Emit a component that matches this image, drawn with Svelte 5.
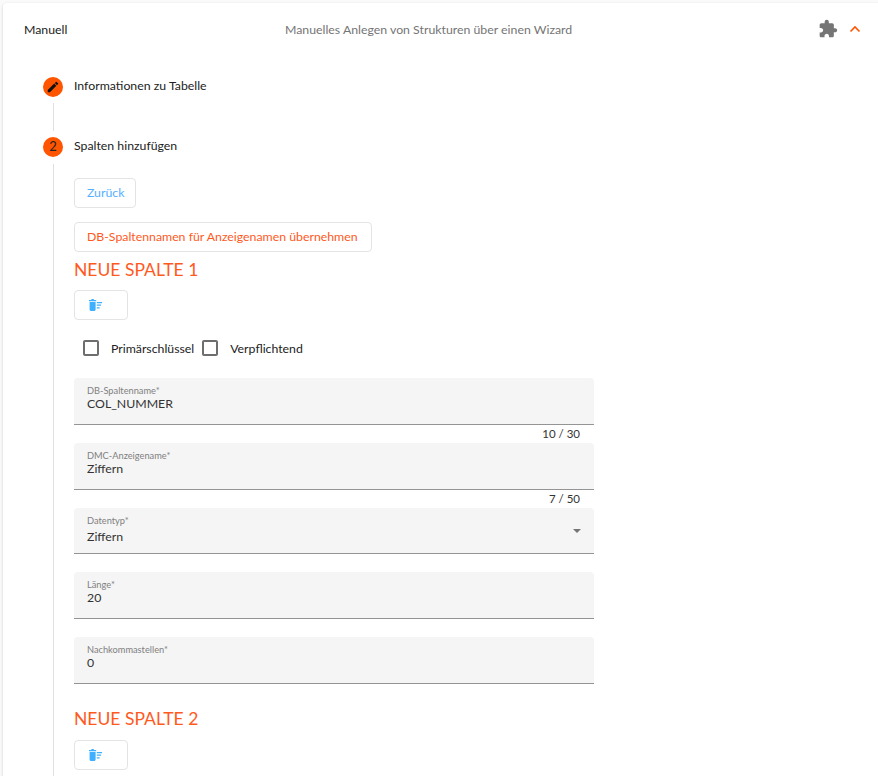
<script>
	const firstFields = [
		{ label: 'DB-Spaltenname*', value: 'COL_NUMMER', hint: '10 / 30' },
		{ label: 'DMC-Anzeigename*', value: 'Ziffern', hint: '7 / 50' },
		{ label: 'Datentyp*', value: 'Ziffern', select: true },
		{ label: 'Länge*', value: '20' },
		{ label: 'Nachkommastellen*', value: '0' }
	];
</script>

<div class="page">
	<section class="card">
		<header class="head">
			<span class="title">Manuell</span>
			<span class="subtitle">Manuelles Anlegen von Strukturen über einen Wizard</span>
			<span class="actions">
				<svg class="puzzle" viewBox="0 0 24 24" width="20" height="20">
					<path fill="#757575" d="M20.5 11H19V7c0-1.1-.9-2-2-2h-4V3.5C13 2.12 11.88 1 10.5 1S8 2.12 8 3.5V5H4c-1.1 0-1.99.9-1.99 2v3.8H3.5c1.49 0 2.7 1.21 2.7 2.7s-1.21 2.7-2.7 2.7H2V20c0 1.1.9 2 2 2h3.8v-1.5c0-1.49 1.21-2.7 2.7-2.7s2.7 1.21 2.7 2.7V22H17c1.1 0 2-.9 2-2v-4h1.5c1.38 0 2.5-1.12 2.5-2.5S21.88 11 20.5 11z" />
				</svg>
				<svg class="chevron" viewBox="0 0 12 8" width="12" height="8">
					<path d="M1.5 6.5 6 2l4.5 4.5" fill="none" stroke="#ff5500" stroke-width="1.6" />
				</svg>
			</span>
		</header>

		<div class="stepper">
			<div class="step-head">
				<span class="badge">
					<svg viewBox="0 0 24 24" width="14" height="14">
						<path fill="#111" d="M3 17.25V21h3.75L17.81 9.94l-3.75-3.75L3 17.25zM20.71 7.04a1 1 0 0 0 0-1.41l-2.34-2.34a1 1 0 0 0-1.41 0l-1.83 1.83 3.75 3.75 1.83-1.83z" />
					</svg>
				</span>
				<span class="step-label">Informationen zu Tabelle</span>
			</div>
			<div class="step-gap"></div>

			<div class="step-head">
				<span class="badge number">2</span>
				<span class="step-label">Spalten hinzufügen</span>
			</div>

			<div class="step-body">
				<button class="btn back">Zurück</button>
				<button class="btn accent">DB-Spaltennamen für Anzeigenamen übernehmen</button>

				<h2>NEUE SPALTE 1</h2>
				<button class="btn trash" aria-label="Spalte löschen">
					<svg viewBox="0 0 14 12" width="14" height="12">
						<path fill="#3fb0ff" d="M2.4 0h2.4v1h2.4v1.2H0V1h2.4zM.6 3h6v7.6c0 .8-.5 1.4-1.2 1.4H1.8c-.7 0-1.2-.6-1.2-1.4z" />
						<path fill="#3fb0ff" d="M7.8 3h5.2v1.2H7.8zM7.8 5.6h4.2v1.2H7.8zM7.8 8.2h2.8v1.2H7.8z" />
					</svg>
				</button>

				<div class="checks">
					<span class="box"></span>
					<span class="check-label first">Primärschlüssel</span>
					<span class="box"></span>
					<span class="check-label">Verpflichtend</span>
				</div>

				<div class="fields">
					{#each firstFields as f}
						<div class="field-wrap">
							<div class="field" class:select={f.select}>
								<span class="field-label">{f.label}</span>
								<span class="field-value">{f.value}</span>
								{#if f.select}
									<span class="arrow"></span>
								{/if}
							</div>
							{#if f.hint}
								<div class="hint">{f.hint}</div>
							{/if}
						</div>
					{/each}
				</div>

				<h2 class="second">NEUE SPALTE 2</h2>
				<button class="btn trash" aria-label="Spalte löschen">
					<svg viewBox="0 0 14 12" width="14" height="12">
						<path fill="#3fb0ff" d="M2.4 0h2.4v1h2.4v1.2H0V1h2.4zM.6 3h6v7.6c0 .8-.5 1.4-1.2 1.4H1.8c-.7 0-1.2-.6-1.2-1.4z" />
						<path fill="#3fb0ff" d="M7.8 3h5.2v1.2H7.8zM7.8 5.6h4.2v1.2H7.8zM7.8 8.2h2.8v1.2H7.8z" />
					</svg>
				</button>
			</div>
		</div>
	</section>
</div>

<style>
	:global(body) {
		background: #fafafa;
		overflow: hidden;
	}

	.page {
		height: 776px;
		overflow: hidden;
		padding: 3px 0 0 3px;
		box-sizing: border-box;
		font-family: 'Lato', sans-serif;
		font-size: 12.3px;
		color: #222;
	}

	.card {
		background: #fff;
		border-radius: 4px 0 0 4px;
		box-shadow: 0 1px 3px rgba(0, 0, 0, 0.18);
		height: 900px;
	}

	.head {
		display: grid;
		grid-template-columns: 261px auto 1fr;
		align-items: center;
		height: 52px;
		padding: 0 17px 0 21px;
	}

	.subtitle {
		color: #757575;
	}

	.actions {
		justify-self: end;
		display: flex;
		align-items: center;
		gap: 11px;
	}

	.stepper {
		padding: 22px 0 0 40px;
	}

	.step-head {
		display: flex;
		align-items: flex-start;
		height: 20px;
	}

	.badge {
		width: 20px;
		height: 20px;
		border-radius: 50%;
		background: #ff5500;
		color: #222;
		display: flex;
		align-items: center;
		justify-content: center;
		flex: none;
	}

	.badge.number {
		font-size: 13px;
		padding-bottom: 2px;
		box-sizing: border-box;
	}

	.step-label {
		margin-left: 11px;
		line-height: 18.5px;
	}

	.step-gap {
		margin: 6px 0 6px 10px;
		height: 28px;
		border-left: 1px solid #e0e0e0;
	}

	.step-body {
		margin: 7px 0 0 10px;
		padding: 14px 0 40px 20px;
		border-left: 1px solid #e0e0e0;
		display: flex;
		flex-direction: column;
		align-items: flex-start;
	}

	.btn {
		height: 30px;
		padding: 0 12px 2px;
		background: #fff;
		border: 1px solid #e4e4e4;
		border-radius: 4px;
		font-family: inherit;
		font-size: 12.3px;
	}

	.back {
		color: #55b0ff;
		margin-bottom: 14px;
		padding-right: 11px;
	}

	.accent {
		color: #ff5a1e;
		padding-right: 13px;
	}

	h2 {
		margin: 7px 0 9px;
		font-size: 17.5px;
		line-height: 22px;
		font-weight: 400;
		color: #ff5a1e;
	}

	h2.second {
		margin-top: 24px;
		margin-bottom: 10px;
	}

	.trash {
		width: 54px;
		display: flex;
		align-items: center;
		padding: 0 14px;
	}

	.checks {
		display: flex;
		align-items: center;
		height: 16px;
		margin: 20px 0 22px 9px;
	}

	.box {
		width: 12px;
		height: 12px;
		border: 2px solid #6e6e6e;
		border-radius: 2px;
		flex: none;
	}

	.check-label {
		margin-left: 12px;
		color: #222;
	}

	.check-label.first {
		margin-right: 8px;
	}

	.fields {
		width: 520px;
		display: flex;
		flex-direction: column;
		gap: 18px;
	}

	.field-wrap {
		position: relative;
	}

	.field {
		position: relative;
		height: 45.75px;
		background: #f5f5f5;
		border-bottom: 1px solid #949494;
		border-radius: 4px 4px 0 0;
		padding: 0 13px;
	}

	.field-label {
		display: block;
		padding-top: 7px;
		font-size: 9.25px;
		line-height: 11px;
		color: #808080;
	}

	.field-value {
		display: block;
		line-height: 15px;
		color: #333;
	}

	.select .field-value {
		margin-top: 3px;
	}

	.arrow {
		position: absolute;
		right: 13px;
		top: 21px;
		border: 4px solid transparent;
		border-top-color: #757575;
		border-bottom: 0;
	}

	.hint {
		position: absolute;
		top: 100%;
		right: 14px;
		line-height: 18px;
		font-size: 11.5px;
		color: #333;
	}
</style>
